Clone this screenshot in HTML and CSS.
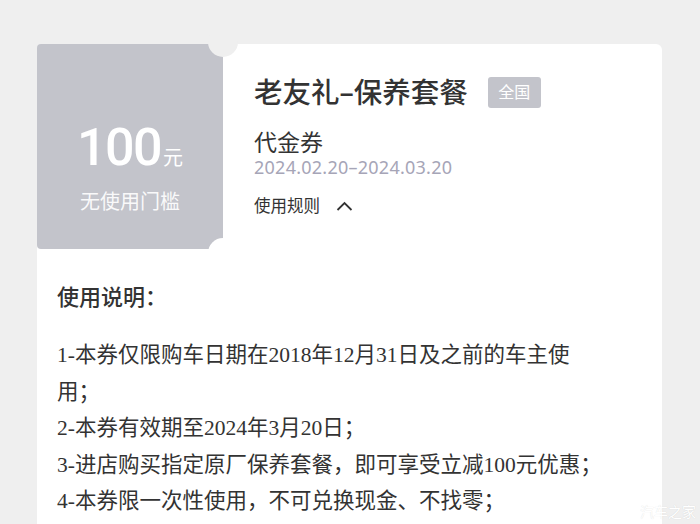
FILE: index.html
```html
<!DOCTYPE html>
<html lang="zh-CN">
  <head>
    <meta charset="UTF-8" />
    <meta name="viewport" content="width=device-width, initial-scale=1.0" />
    <title>老友礼-保养套餐</title>
    <link rel="stylesheet" href="styles.css">
  </head>
  <body>
    <div class="page">
      <div class="card">
        <div class="coupon">
          <div class="amount">
            <div class="value">100<span class="unit">元</span></div>
            <div class="limit">无使用门槛</div>
          </div>
          <div class="info">
            <div class="title-row">
              <h1>老友礼–保养套餐</h1>
              <span class="badge">全国</span>
            </div>
            <div class="type">代金券</div>
            <div class="dates">2024.02.20–2024.03.20</div>
            <div class="rules">
              使用规则
              <svg width="19" height="12" viewBox="0 0 19 12">
                <path d="M2.5 10 L9.5 3 L16.5 10" fill="none" stroke="#333" stroke-width="1.8" />
              </svg>
            </div>
          </div>
        </div>
        <div class="desc">
          <h2>使用说明：</h2>
          <p>1-本券仅限购车日期在2018年12月31日及之前的车主使用；</p>
          <p>2-本券有效期至2024年3月20日；</p>
          <p>3-进店购买指定原厂保养套餐，即可享受立减100元优惠；</p>
          <p>4-本券限一次性使用，不可兑换现金、不找零；</p>
        </div>
      </div>
    </div>
    <div class="watermark">汽车之家</div>
  </body>
</html>
```

FILE: styles.css
```css
body {
  margin: 0;
  background-color: #efefef;
  font-family: "Noto Sans", "Noto Sans CJK SC", sans-serif;
  color: #333;
  overflow: hidden;
  height: 524px;
}
.page {
  padding: 44px 0 0 37px;
}
.card {
  width: 625px;
  height: 480px;
  background: white;
  border-radius: 6px 6px 0 0;
}
.coupon {
  display: flex;
}
.amount {
  position: relative;
  width: 186px;
  height: 205px;
  flex-shrink: 0;
  background-color: #c3c4cb;
  border-radius: 4px;
  color: white;
  text-align: center;
  padding-top: 78px;
  box-sizing: border-box;
}
.amount::before,
.amount::after {
  content: "";
  position: absolute;
  width: 30px;
  height: 30px;
  border-radius: 50%;
  left: 171px;
}
.amount::before {
  top: -17px;
  background: #efefef;
}
.amount::after {
  bottom: -19px;
  background: white;
}
.value {
  font-family: Roboto, "Noto Sans", sans-serif;
  font-weight: 500;
  font-size: 52px;
  line-height: 52px;
  letter-spacing: -1.5px;
}
.unit {
  font-family: "Noto Sans CJK SC", sans-serif;
  font-weight: 400;
  font-size: 20px;
  letter-spacing: 0;
  margin-left: 2px;
}
.limit {
  margin-top: 5px;
  font-size: 20px;
  line-height: 28px;
  color: rgba(255, 255, 255, 0.92);
}
.info {
  padding: 31px 0 0 31px;
}
.title-row {
  display: flex;
  align-items: center;
  height: 34px;
}
h1 {
  margin: 0;
  font-size: 28.5px;
  font-weight: 500;
  line-height: 34px;
}
.badge {
  margin-left: 20px;
  background-color: #c3c4cb;
  color: white;
  font-size: 16px;
  line-height: 31px;
  padding: 0 10.5px;
  border-radius: 3px;
}
.type {
  margin-top: 19px;
  font-size: 23px;
  line-height: 28px;
}
.dates {
  font-size: 18px;
  line-height: 22px;
  color: #a6a5b7;
  letter-spacing: 0.25px;
}
.rules {
  margin-top: 16px;
  font-size: 16.5px;
  line-height: 24px;
  display: flex;
  align-items: center;
}
.rules svg {
  margin-left: 15px;
}
.desc {
  padding: 0 20px;
}
h2 {
  margin: 32px 0 26px;
  font-size: 22px;
  font-weight: 500;
  line-height: 30px;
}
.desc p {
  margin: 0;
  width: 550px;
  font-family: "Liberation Serif", "Noto Sans CJK SC", serif;
  font-size: 21.5px;
  line-height: 36.5px;
}
.watermark {
  position: absolute;
  right: 4px;
  bottom: 3px;
  font-size: 14px;
  color: white;
  text-shadow: 0 0 1px rgba(0, 0, 0, 0.15);
}
```
